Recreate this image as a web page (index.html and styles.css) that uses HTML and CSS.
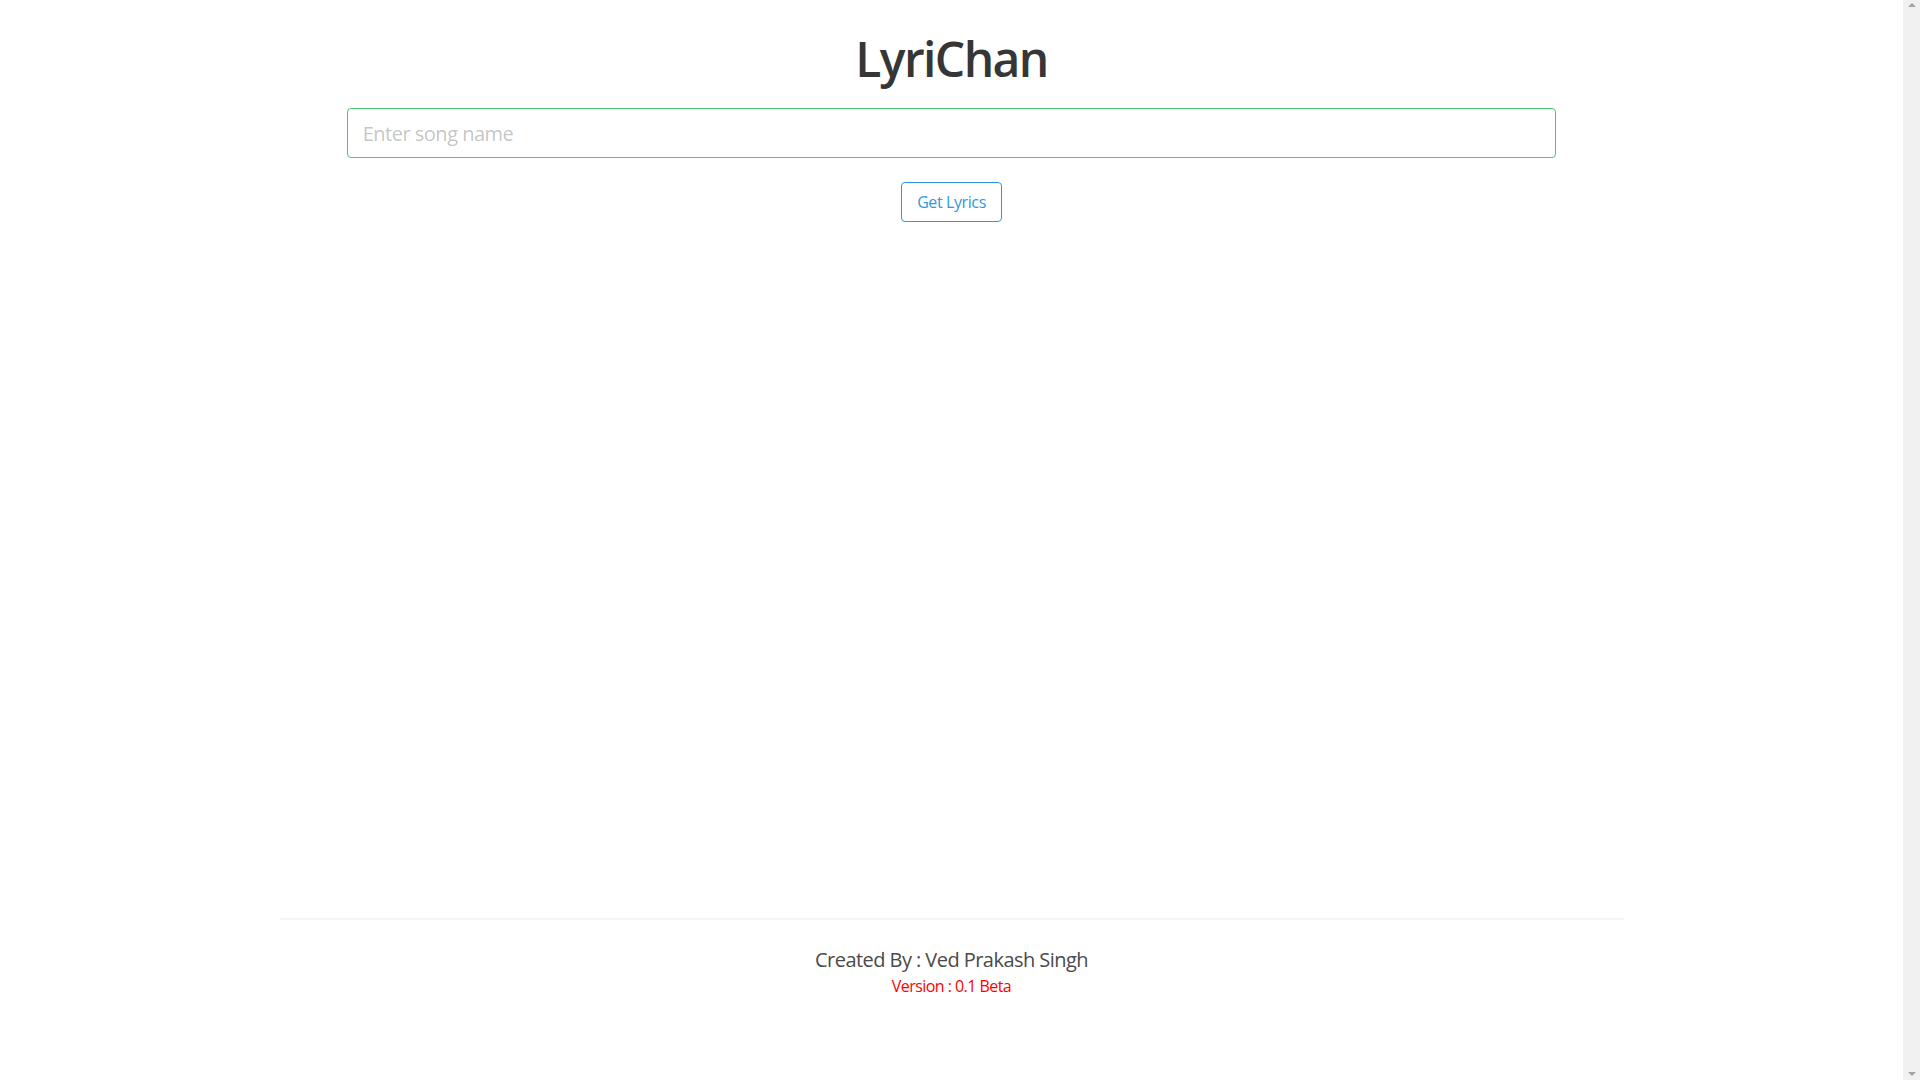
FILE: index.html
```html
<!DOCTYPE html>
<html lang="en">
<head>
<meta charset="utf-8">
<title>LyriChan</title>
<link rel="stylesheet" href="styles.css">
</head>
<body>
<div class="viewport">
  <div class="page">
    <section class="hero">
      <div class="container">
        <h1 class="title">LyriChan</h1>
        <div class="field">
          <input class="input" type="text" placeholder="Enter song name">
        </div>
        <div class="actions">
          <button class="button" type="button">Get Lyrics</button>
        </div>
        <div class="results"></div>
      </div>
    </section>
    <footer class="footer">
      <div class="container">
        <hr class="divider">
        <p class="credit">Created By : Ved Prakash Singh</p>
        <p class="version">Version : 0.1 Beta</p>
      </div>
    </footer>
  </div>
  <div class="scrollbar" aria-hidden="true">
    <span class="arrow arrow-up"></span>
    <span class="arrow arrow-down"></span>
  </div>
</div>
</body>
</html>
```
FILE: styles.css
```css
html {
  overflow: hidden;
  background: #ffffff;
}
body {
  margin: 0;
  font-family: "Open Sans", "Noto Sans", "Liberation Sans", sans-serif;
  color: #4a4a4a;
}
.viewport {
  display: flex;
  height: 100vh;
}
.page {
  flex: 1;
  min-width: 0;
}
.scrollbar {
  width: 17px;
  flex: none;
  background: #f1f1f1;
  display: flex;
  flex-direction: column;
  justify-content: space-between;
  align-items: center;
  padding: 3px 0 4px;
  box-sizing: border-box;
}
.arrow {
  width: 0;
  height: 0;
  border-left: 4px solid transparent;
  border-right: 4px solid transparent;
}
.arrow-up {
  border-bottom: 4px solid #a3a3a3;
}
.arrow-down {
  border-top: 4px solid #a3a3a3;
}
.container {
  width: 1344px;
  margin: 0 auto;
}
.hero {
  padding-top: 32px;
}
.title {
  margin: 0 0 22px;
  font-size: 48px;
  line-height: 54px;
  font-weight: 600;
  letter-spacing: -1.6px;
  color: #363636;
  text-align: center;
}
.field {
  width: 90%;
  margin: 0 auto;
}
.input {
  box-sizing: border-box;
  display: block;
  width: 100%;
  height: 50px;
  padding: 0 15px;
  border: 1px solid #48c774;
  border-radius: 4px;
  font-family: inherit;
  font-size: 20px;
  letter-spacing: -0.5px;
  color: #363636;
  background: #ffffff;
  outline: none;
}
.input::placeholder {
  color: rgba(54, 54, 54, 0.3);
}
.actions {
  display: flex;
  justify-content: center;
  margin-top: 24px;
}
.button {
  box-sizing: border-box;
  height: 40px;
  padding: 0 15px;
  border: 1px solid #3298dc;
  border-radius: 4px;
  background: #ffffff;
  color: #3298dc;
  font-family: inherit;
  font-size: 16px;
  letter-spacing: -0.4px;
  cursor: pointer;
}
.results {
  height: 672px;
}
.divider {
  margin: 24px 0;
  height: 2px;
  border: none;
  background: #f5f5f5;
}
.credit {
  margin: 27px 0 0;
  font-size: 20px;
  line-height: 25px;
  letter-spacing: -0.55px;
  text-align: center;
  color: #4a4a4a;
}
.version {
  margin: 2px 0 0;
  font-size: 16px;
  line-height: 24px;
  letter-spacing: -0.55px;
  text-align: center;
  color: #ff0000;
}
```
